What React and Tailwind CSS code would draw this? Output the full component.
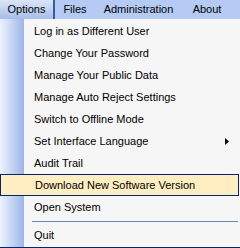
import { useState } from 'react';

const items = [
  { label: 'Log in as Different User' },
  { label: 'Change Your Password' },
  { label: 'Manage Your Public Data' },
  { label: 'Manage Auto Reject Settings' },
  { label: 'Switch to Offline Mode' },
  { label: 'Set Interface Language', submenu: true },
  { label: 'Audit Trail' },
  { label: 'Download New Software Version' },
  { label: 'Open System' },
  { separator: true },
  { label: 'Quit' },
];

const menus = [
  { label: 'Options', w: 'w-[55px]' },
  { label: 'Files', w: 'w-[40px]' },
  { label: 'Administration', w: 'w-[87px]' },
  { label: 'About', w: 'w-[50px]' },
];

export default function App() {
  const [hover, setHover] = useState(7);

  return (
    <div className="w-[240px] h-[248px] overflow-hidden bg-[#f6f6f6] font-['Liberation_Sans',Arial,sans-serif] text-[11px] text-black">
      {/* menu bar */}
      <div className="h-[19px] flex bg-[#b5cbf3]">
        {menus.map((m, i) => (
          <div
            key={m.label}
            className={`${m.w} h-full flex items-center justify-center ${
              i === 0
                ? 'bg-gradient-to-b from-[#dbe5f8] to-[#a7bde9] border-r-2 border-[#3d5a9c]'
                : ''
            }`}
          >
            {m.label}
          </div>
        ))}
      </div>

      {/* dropdown */}
      <div className="relative pt-[1px] border-b border-[#0a246a] h-[229px]">
        <div className="absolute left-0 top-0 bottom-0 w-[24px] bg-gradient-to-r from-[#eef3fd] to-[#9db6e8]" />
        {items.map((it, i) =>
          it.separator ? (
            <div key={i} className="relative h-[6px] flex items-center pl-[32px] pr-[2px]">
              <div className="h-px w-full bg-[#6a85c0]" />
            </div>
          ) : (
            <div
              key={i}
              onMouseEnter={() => setHover(i)}
              className={`relative h-[22px] w-[239px] flex items-center pl-[34px] pr-2 ${
                hover === i ? 'bg-[#ffeec2] border border-[#0a246a] pl-[33px]' : ''
              }`}
            >
              <span className="flex-1">{it.label}</span>
              {it.submenu && (
                <svg width="4" height="7" viewBox="0 0 4 7" className="mr-[2px]">
                  <path d="M0 0 L4 3.5 L0 7 Z" fill="#000" />
                </svg>
              )}
            </div>
          )
        )}
      </div>
    </div>
  );
}
